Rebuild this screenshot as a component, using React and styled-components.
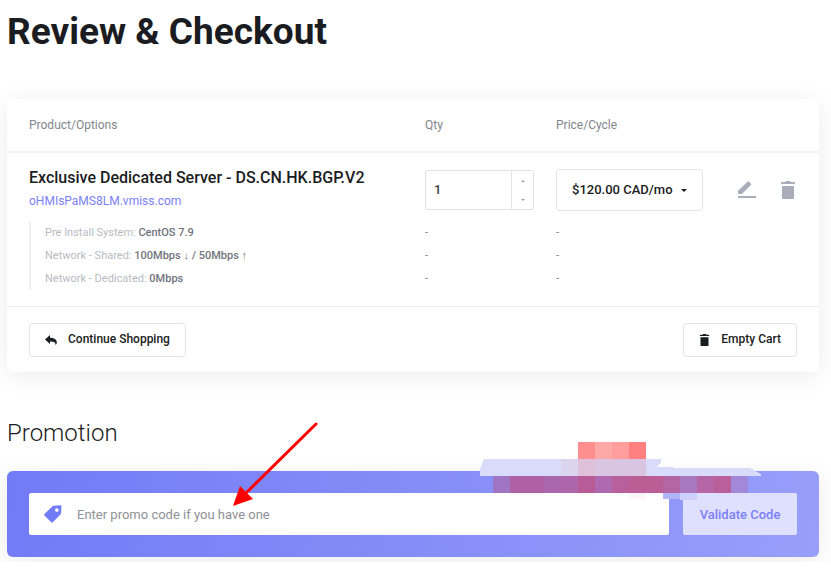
import React, { useState } from 'react';
import styled, { createGlobalStyle } from 'styled-components';

const GlobalStyle = createGlobalStyle`
  * {
    box-sizing: border-box;
  }

  body {
    margin: 0;
    background: #fff;
    color: #1a1c21;
    font-family: Roboto, "Liberation Sans", sans-serif;
    font-size: 12px;
  }

  button, input, select {
    margin: 0;
    font-family: inherit;
    color: inherit;
  }
`;

const Page = styled.main`
  padding: 9px 12px 5px 7px;
  overflow: hidden;
`;

const Title = styled.h1`
  margin: 0 0 44px;
  font-size: 37px;
  line-height: 46px;
  font-weight: 700;
`;

const Card = styled.section`
  border-radius: 6px;
  background: #fff;
  box-shadow: 0 4px 24px rgba(0, 0, 0, 0.08);
`;

const CartTable = styled.table`
  width: 100%;
  table-layout: fixed;
  border-collapse: collapse;
`;

const Col = styled.col`
  width: ${props => props.$width || 'auto'};
`;

const HeadCell = styled.th`
  height: 53px;
  padding: 0 0 0 ${props => (props.$first ? '22px' : '0')};
  border-bottom: 2px solid #f2f2f3;
  color: #83858c;
  font-weight: 400;
  text-align: left;
`;

const Cell = styled.td`
  height: ${props => (props.$main ? '69px' : '23px')};
  padding: 0 0 0 ${props => (props.$first ? '22px' : '0')};
  color: #83858c;
  font-size: 11px;
  vertical-align: middle;
`;

const ControlCell = styled(Cell)`
  padding-top: 6px;
`;

const ProductName = styled.div`
  padding-top: 4px;
  color: #1a1c21;
  font-size: 16px;
  line-height: 24px;
  font-weight: 500;
`;

const ProductLink = styled.a`
  color: #7b80f8;
  font-size: 12px;
  line-height: 22px;
  text-decoration: none;
`;

const Option = styled.div`
  padding-left: 14px;
  border-left: 2px solid #f0f0f2;
  line-height: 23px;
  color: #b9bbc3;

  b {
    color: #71737b;
    font-weight: 500;
  }
`;

const QtyBox = styled.div`
  display: flex;
  width: 109px;
  height: 40px;
  border: 1px solid #dfe2e4;
  border-radius: 2px;
`;

const QtyInput = styled.input`
  flex: 1;
  min-width: 0;
  padding: 0 8px 2px;
  border: 0;
  background: none;
  color: #3f4147;
  font-size: 13px;
  font-weight: 500;
  appearance: textfield;
  outline: none;

  &::-webkit-inner-spin-button {
    appearance: none;
  }
`;

const Stepper = styled.div`
  display: flex;
  flex-direction: column;
  width: 22px;
  border-left: 1px solid #e4e6e8;
`;

const StepButton = styled.button`
  display: flex;
  flex: 1;
  align-items: center;
  justify-content: center;
  padding: 0;
  border: 0;
  background: none;
  color: #9a9ca5;
`;

const PriceBox = styled.div`
  display: grid;
  grid-template-columns: 1fr 22px;
  align-items: center;
  width: 147px;
`;

const PriceSelect = styled.select`
  grid-area: 1 / 1 / 2 / 3;
  height: 42px;
  padding: 0 15px 2px;
  border: 1px solid #e4e5e8;
  border-radius: 3px;
  background: #fff;
  color: #1a1c21;
  font-size: 13px;
  font-weight: 500;
  appearance: none;
`;

const Caret = styled.svg`
  grid-area: 1 / 2;
  pointer-events: none;
`;

const Actions = styled.div`
  display: flex;
  justify-content: flex-end;
  gap: 22px;
  padding-right: 24px;
`;

const IconButton = styled.button`
  display: flex;
  padding: 0;
  border: 0;
  background: none;
  color: #abadbb;
`;

const CardFooter = styled.div`
  display: flex;
  justify-content: space-between;
  margin-top: 16px;
  padding: 16px 22px 15px;
  border-top: 1px solid #ececee;
`;

const OutlineButton = styled.button`
  display: flex;
  align-items: center;
  gap: 11px;
  height: 34px;
  padding: 0 15px 2px;
  border: 1px solid #e4e5e8;
  border-radius: 3px;
  background: #fff;
  font-size: 12px;
  font-weight: 500;

  svg {
    margin-top: 2px;
  }
`;

const SubTitle = styled.h2`
  margin: 45px 0 22px;
  font-size: 24px;
  line-height: 32px;
  font-weight: 300;
`;

const PromoPanel = styled.form`
  position: relative;
  display: flex;
  gap: 14px;
  padding: 22px;
  border-radius: 6px;
  background: linear-gradient(100deg, #727bf6, #989ef9);
  box-shadow: 0 4px 24px rgba(0, 0, 0, 0.08);
`;

const PromoField = styled.label`
  display: flex;
  flex: 1;
  align-items: center;
  gap: 15px;
  height: 42px;
  padding: 0 15px;
  border-radius: 2px;
  background: #fff;
  color: #727bf6;
`;

const PromoInput = styled.input`
  flex: 1;
  min-width: 0;
  padding: 0;
  border: 0;
  background: none;
  color: #1a1c21;
  font-size: 13px;
  outline: none;

  &::placeholder {
    color: #8f9197;
  }
`;

const ValidateButton = styled.button`
  width: 114px;
  height: 42px;
  padding: 0;
  border: 0;
  border-radius: 2px;
  background: #dfe0fd;
  color: #7b80f8;
  font-size: 13px;
  font-weight: 500;
`;

const Pointer = styled.svg`
  position: absolute;
  top: -50px;
  left: 224px;
  pointer-events: none;
`;

const Mosaic = styled.svg`
  position: absolute;
  top: -41px;
  right: 53px;
  pointer-events: none;
`;

const options = [
  { label: 'Pre Install System:', value: 'CentOS 7.9' },
  { label: 'Network - Shared:', value: '100Mbps ↓ / 50Mbps ↑' },
  { label: 'Network - Dedicated:', value: '0Mbps' },
];

// [x, y, width, height, colour]
const tiles = [
  [98, 12, 17, 17, '#ff8f8f'],
  [115, 12, 17, 17, '#ffa8a8'],
  [132, 12, 17, 17, '#ff9c9c'],
  [149, 12, 17, 17, '#ff8080'],
  [81, 29, 17, 17, '#dad4ee'],
  [98, 29, 17, 17, '#dfc0da'],
  [115, 29, 51, 17, '#d9c5e2'],
  [13, 46, 17, 17, '#9f75c4'],
  [30, 46, 34, 17, '#b060a5'],
  [64, 46, 17, 17, '#a968ae'],
  [81, 46, 17, 17, '#ae66ab'],
  [98, 46, 17, 17, '#b85c98'],
  [115, 46, 17, 17, '#ae69b0'],
  [132, 46, 17, 17, '#b8609c'],
  [149, 46, 34, 17, '#bb5e96'],
  [183, 46, 17, 17, '#b465a4'],
  [200, 46, 17, 17, '#a878c0'],
  [217, 46, 17, 17, '#b566a6'],
  [234, 46, 17, 17, '#b9609a'],
  [251, 46, 17, 17, '#a288d8'],
  [149, 63, 17, 6, '#fdf5f8'],
  [183, 63, 17, 6, '#b0b5f8'],
  [200, 63, 17, 7, '#cdd0fc'],
];

const TrashIcon = ({ width, height }) => (
  <svg width={width} height={height} viewBox="0 0 14 18" fill="currentColor">
    <path d="M0 3V2q0-1 1-1h3l1-1h4l1 1h3q1 0 1 1v1zM1 5h12v12q0 1-1 1H2q-1 0-1-1z" />
  </svg>
);

const App = () => {
  const [qty, setQty] = useState(1);

  return (
    <>
      <GlobalStyle />
      <Page>
        <Title>Review &amp; Checkout</Title>

        <Card>
          <CartTable>
            <colgroup>
              <Col />
              <Col $width="131px" />
              <Col $width="156px" />
              <Col $width="107px" />
            </colgroup>
            <thead>
              <tr>
                <HeadCell $first>Product/Options</HeadCell>
                <HeadCell>Qty</HeadCell>
                <HeadCell>Price/Cycle</HeadCell>
                <HeadCell />
              </tr>
            </thead>
            <tbody>
              <tr>
                <Cell $main $first>
                  <ProductName>Exclusive Dedicated Server - DS.CN.HK.BGP.V2</ProductName>
                  <ProductLink href="#product">oHMIsPaMS8LM.vmiss.com</ProductLink>
                </Cell>
                <ControlCell $main>
                  <QtyBox>
                    <QtyInput
                      type="number"
                      aria-label="Qty"
                      value={qty}
                      onChange={e => setQty(Number(e.target.value))}
                    />
                    <Stepper>
                      <StepButton aria-label="Increase" onClick={() => setQty(qty + 1)}>
                        <svg width="4" height="2" viewBox="0 0 4 2" fill="currentColor"><path d="M0 2L2 0l2 2z" /></svg>
                      </StepButton>
                      <StepButton aria-label="Decrease" onClick={() => setQty(Math.max(1, qty - 1))}>
                        <svg width="4" height="2" viewBox="0 0 4 2" fill="currentColor"><path d="M0 0l2 2 2-2z" /></svg>
                      </StepButton>
                    </Stepper>
                  </QtyBox>
                </ControlCell>
                <ControlCell $main>
                  <PriceBox>
                    <PriceSelect aria-label="Price/Cycle">
                      <option>$120.00 CAD/mo</option>
                    </PriceSelect>
                    <Caret width="6" height="3" viewBox="0 0 6 3"><path d="M0 0h6L3 3z" fill="#1a1c21" /></Caret>
                  </PriceBox>
                </ControlCell>
                <ControlCell $main>
                  <Actions>
                    <IconButton aria-label="Edit">
                      <svg width="22" height="18" viewBox="0 0 22 18" fill="currentColor">
                        <path d="M1 15h18v2H1zM1 9.800L10.500.7q.7-.7 1.400 0l2 1.900q.7.7 0 1.400L5 13H1z" />
                      </svg>
                    </IconButton>
                    <IconButton aria-label="Remove"><TrashIcon width={14} height={18} /></IconButton>
                  </Actions>
                </ControlCell>
              </tr>
              {options.map(option => (
                <tr key={option.label}>
                  <Cell $first><Option>{option.label} <b>{option.value}</b></Option></Cell>
                  <Cell>-</Cell>
                  <Cell>-</Cell>
                  <Cell />
                </tr>
              ))}
            </tbody>
          </CartTable>

          <CardFooter>
            <OutlineButton>
              <svg width="12" height="10" viewBox="0 0 12 10" fill="currentColor">
                <path d="M0 4.500L5 0v2.700c4 0 7 1.800 6.800 4.800q0 1.500-1.300 2.500C10.800 7.500 9 6.400 5 6.400V9z" />
              </svg>
              Continue Shopping
            </OutlineButton>
            <OutlineButton>
              <TrashIcon width={11} height={12} />
              Empty Cart
            </OutlineButton>
          </CardFooter>
        </Card>

        <SubTitle>Promotion</SubTitle>
        <PromoPanel onSubmit={e => e.preventDefault()}>
          <PromoField>
            <svg width="18" height="18" viewBox="0 0 18 18" fill="currentColor">
              <path fillRule="evenodd" d="M9.500.700L16.500.300q1 0 1 1L17 8.500q0 .6-.5 1L9 17q-1 1-2 0L.7 10.800q-1-1 0-2L8.500 1.200q.5-.5 1-.5zM12.800 3.200a1.800 1.800 0 1 0 .1 0z" />
            </svg>
            <PromoInput type="text" aria-label="Promo code" placeholder="Enter promo code if you have one" />
          </PromoField>
          <ValidateButton type="submit">Validate Code</ValidateButton>

          <Pointer width="96" height="90" viewBox="0 0 96 90">
            <path d="M85 3L16 71" stroke="#f00" strokeWidth="3" strokeLinecap="round" />
            <path d="M2 85L9 65l13 13z" fill="#f00" />
          </Pointer>
          <Mosaic width="286" height="75" viewBox="0 0 286 75" shapeRendering="crispEdges">
            <path d="M4 29h177v3l-4 5h17v1h76l11 6v2H0v-7z" fill="#d8dbf9" />
            {tiles.map(([x, y, w, h, fill]) => (
              <rect key={`${x}-${y}`} x={x} y={y} width={w} height={h} fill={fill} />
            ))}
          </Mosaic>
        </PromoPanel>
      </Page>
    </>
  );
};

export default App;
